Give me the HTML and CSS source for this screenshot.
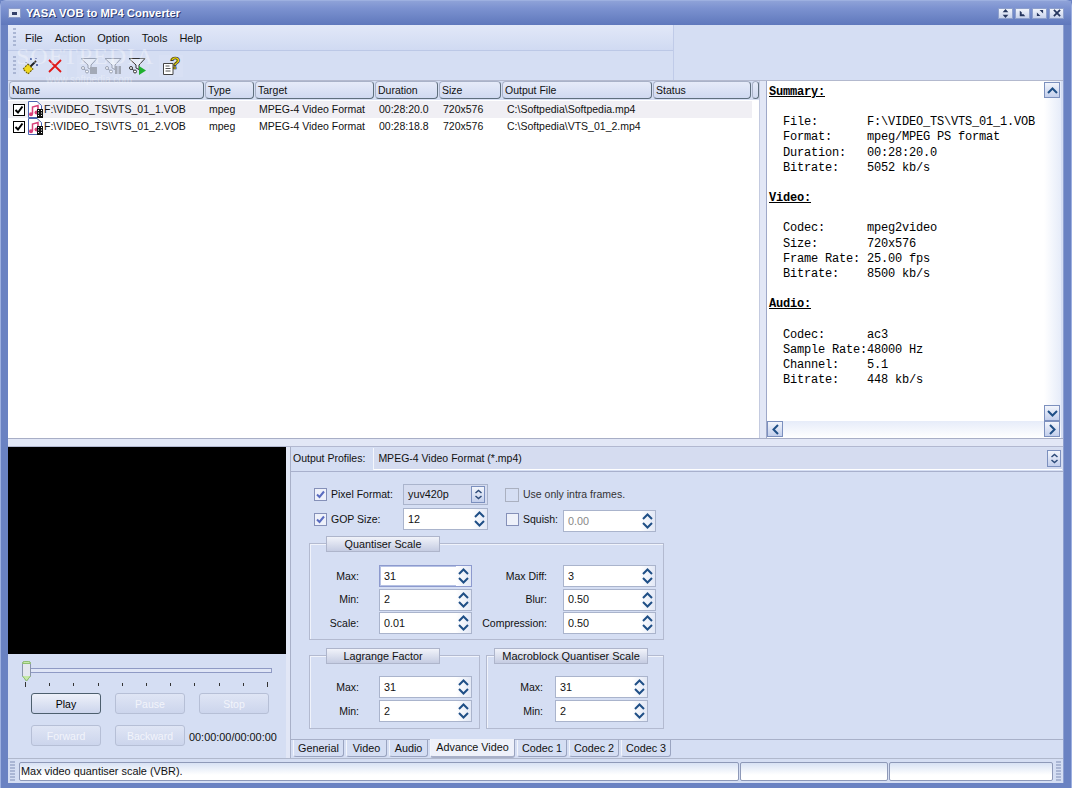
FILE: index.html
```
<!DOCTYPE html>
<html lang="en">
<head>
<meta charset="utf-8">
<title>YASA VOB to MP4 Converter</title>
<link rel="stylesheet" href="styles.css">
</head>
<body>
<svg class="defs" width="0" height="0" aria-hidden="true">
  <defs>
    <symbol id="up" viewBox="0 0 11 7"><path d="M1 6 5.500 1.500 10 6" fill="none" stroke="#1f4f86" stroke-width="2"/></symbol>
    <symbol id="down" viewBox="0 0 11 7"><path d="M1 1 5.500 5.500 10 1" fill="none" stroke="#1f4f86" stroke-width="2"/></symbol>
    <symbol id="updown" viewBox="0 0 9 11"><path d="M1.500 4 4.500 1.500 7.500 4M1.500 7 4.500 9.500 7.500 7" fill="none" stroke="#2c4a78" stroke-width="1.500"/></symbol>
    <symbol id="file" viewBox="0 0 16 17">
      <path d="M.5 .5H9L13.500 4.500V16.500H.5Z" fill="#fff" stroke="#4a64b0"/>
      <path d="M4.500 13V6L10 4.500V11" fill="none" stroke="#d8407a" stroke-width="1.500"/>
      <circle cx="3" cy="13.300" r="2" fill="#d8407a"/>
      <circle cx="8.500" cy="11.500" r="2" fill="#d8407a"/>
      <rect x="9" y="8" width="6" height="9" fill="#111"/>
      <path d="M10 9.500h1M13 9.500h1M10 12h1M13 12h1M10 14.500h1M13 14.500h1" stroke="#fff"/>
    </symbol>
    <symbol id="funnel" viewBox="0 0 18 18">
      <path d="M1 1.500H17L11 8V12.500L8 11V8Z" fill="#e8edf8" stroke="currentColor"/>
      <circle cx="3" cy="11" r="1.500" fill="#fff" stroke="currentColor"/>
      <circle cx="7" cy="14.500" r="1.500" fill="#fff" stroke="currentColor"/>
      <path d="M4 12 6 13.500" stroke="currentColor"/>
    </symbol>
  </defs>
</svg>
<div class="window">
  <header class="titlebar">
    <span class="sysicon"><i></i></span>
    <span class="title">YASA VOB to MP4 Converter</span>
    <div class="winbtns">
      <span class="winbtn"><svg width="9" height="9" viewBox="0 0 9 11"><path d="M4.500 0 8 4H1ZM4.500 11 8 7H1Z" fill="#26365f"/></svg></span>
      <span class="winbtn"><svg width="7" height="7" viewBox="0 0 9 9"><path d="M1 1V8H8L6 5.500H3.500V3Z" fill="#26365f"/></svg></span>
      <span class="winbtn"><svg width="8" height="8" viewBox="0 0 9 9"><path d="M8 1H4L8 5ZM1 8H5L1 4Z" fill="#26365f"/></svg></span>
      <span class="winbtn"><svg width="8" height="8" viewBox="0 0 9 9"><path d="M1 1 8 8M8 1 1 8" stroke="#26365f" stroke-width="2"/></svg></span>
    </div>
  </header>

  <div class="client">
    <div class="bars">
      <div class="bandwrap">
        <nav class="menubar">
          <span class="grip"></span>
          <span>File</span><span>Action</span><span>Option</span><span>Tools</span><span>Help</span>
        </nav>
        <div class="toolbar">
          <span class="grip"></span>
          <span class="tool"><svg width="18" height="18" viewBox="0 0 18 18"><path d="M7 11 14 4" stroke="#222" stroke-width="2"/><path d="M9 1v2M8 2h2M15 7v2M14 8h2M14 1v1M4 5v1" stroke="#3a4a90"/><rect x="2.500" y="8.500" width="7" height="7" fill="#f0d820" stroke="#6a5a00" stroke-dasharray="2 1" transform="rotate(45 6 12)"/></svg></span>
          <span class="tool"><svg width="16" height="16" viewBox="0 0 16 16"><path d="M2 2 14 14M14 2 2 14" stroke="#e01818" stroke-width="1.800"/></svg></span>
          <span class="tool wide"><svg class="dim" width="18" height="18"><use href="#funnel"/><rect x="10" y="10" width="7" height="7" fill="#9aa0ac"/></svg></span>
          <span class="tool"><svg class="dim" width="18" height="18"><use href="#funnel"/><rect x="11" y="9" width="2.500" height="8" fill="#9aa0ac"/><rect x="14.500" y="9" width="2.500" height="8" fill="#9aa0ac"/></svg></span>
          <span class="tool"><svg class="live" width="18" height="18"><use href="#funnel"/><path d="M11 9 18 13.500 11 18Z" fill="#20b030"/></svg></span>
          <span class="tool wide helptool"><svg width="18" height="18" viewBox="0 0 18 18"><path d="M1.500 6.500H11V17.500H1.500Z" fill="#fff" stroke="#444"/><path d="M3.500 9h4M3.500 11.500h5M3.500 14h5" stroke="#555"/></svg><span class="helpq">?</span></span>
        </div>
      </div>
      <div class="bandrest"></div>
      <div class="watermark"><b>SOFTPEDIA</b><small>www.softpedia.com</small></div>
    </div>

    <section class="top">
      <div class="listpane">
        <div class="lhead">
          <span class="c1">Name</span><span class="c2">Type</span><span class="c3">Target</span><span class="c4">Duration</span><span class="c5">Size</span><span class="c6">Output File</span><span class="c7">Status</span><span class="c8"></span>
        </div>
        <div class="lrow sel">
          <span class="c1 namecell"><i class="tick"><svg width="10" height="10" viewBox="0 0 10 10"><path d="M1.500 5 4 7.500 8.500 1.500" fill="none" stroke="#000" stroke-width="2"/></svg></i><svg width="16" height="17"><use href="#file"/></svg>F:\VIDEO_TS\VTS_01_1.VOB</span><span class="c2">mpeg</span><span class="c3">MPEG-4 Video Format</span><span class="c4">00:28:20.0</span><span class="c5">720x576</span><span class="c6">C:\Softpedia\Softpedia.mp4</span>
        </div>
        <div class="lrow">
          <span class="c1 namecell"><i class="tick"><svg width="10" height="10" viewBox="0 0 10 10"><path d="M1.500 5 4 7.500 8.500 1.500" fill="none" stroke="#000" stroke-width="2"/></svg></i><svg width="16" height="17"><use href="#file"/></svg>F:\VIDEO_TS\VTS_01_2.VOB</span><span class="c2">mpeg</span><span class="c3">MPEG-4 Video Format</span><span class="c4">00:28:18.8</span><span class="c5">720x576</span><span class="c6">C:\Softpedia\VTS_01_2.mp4</span>
        </div>
      </div>
      <div class="vsplit"></div>
      <aside class="summary">
        <div class="sumbody">
<pre class="sumtext"><b>Summary:</b>

  File:       F:\VIDEO_TS\VTS_01_1.VOB
  Format:     mpeg/MPEG PS format
  Duration:   00:28:20.0
  Bitrate:    5052 kb/s

<b>Video:</b>

  Codec:      mpeg2video
  Size:       720x576
  Frame Rate: 25.00 fps
  Bitrate:    8500 kb/s

<b>Audio:</b>

  Codec:      ac3
  Sample Rate:48000 Hz
  Channel:    5.1
  Bitrate:    448 kb/s</pre>
          <div class="vscroll">
            <span class="sbtn"><svg width="11" height="7"><use href="#up"/></svg></span>
            <span class="sbtn"><svg width="11" height="7"><use href="#down"/></svg></span>
          </div>
        </div>
        <div class="hscroll">
          <span class="sbtn"><svg width="7" height="11" viewBox="0 0 7 11"><path d="M6 1 1.500 5.500 6 10" fill="none" stroke="#1f4f86" stroke-width="2"/></svg></span>
          <span class="sbtn"><svg width="7" height="11" viewBox="0 0 7 11"><path d="M1 1 5.500 5.500 1 10" fill="none" stroke="#1f4f86" stroke-width="2"/></svg></span>
        </div>
      </aside>
    </section>

    <div class="hsplit"></div>

    <section class="bottom">
      <div class="player">
        <div class="video"></div>
        <div class="slider">
          <div class="track"></div>
          <svg class="thumb" width="11" height="21" viewBox="0 0 11 21"><path d="M1.500 2.500Q1.500 .5 3.500 .5H7.500Q9.500 .5 9.500 2.500V15L5.500 20 1.500 15Z" fill="#e4e7ef" stroke="#8a94ac"/><path d="M1.500 2.500Q1.500 .5 3.500 .5H7.500Q9.500 .5 9.500 2.500H1.500ZM1.500 15 5.500 20 9.500 15" fill="#c5e8a8" stroke="#8fc070"/></svg>
        </div>
        <div class="ticks">
          <i class="long"></i><i></i><i></i><i></i><i></i><i></i><i></i><i></i><i></i><i></i><i class="long"></i>
        </div>
        <div class="pbtns">
          <button class="pbtn play" type="button">Play</button>
          <button class="pbtn off" type="button">Pause</button>
          <button class="pbtn off" type="button">Stop</button>
        </div>
        <div class="pbtns second">
          <button class="pbtn off" type="button">Forward</button>
          <button class="pbtn off" type="button">Backward</button>
          <span class="time">00:00:00/00:00:00</span>
        </div>
      </div>
      <div class="vdiv"></div>
      <div class="settings">
        <div class="profile">
          <label>Output Profiles:</label>
          <div class="profsel">MPEG-4 Video Format (*.mp4)<span class="sbtn small"><svg width="9" height="11"><use href="#updown"/></svg></span></div>
        </div>
        <div class="form">
          <div class="opts">
            <span class="chk"><i class="box on"><svg width="11" height="11" viewBox="0 0 11 11"><path d="M2 5.500 4.500 8 9 2.500" fill="none" stroke="#5a6cc0" stroke-width="2"/></svg></i>Pixel Format:</span>
            <div class="field combo">yuv420p<span class="sbtn small"><svg width="9" height="11"><use href="#updown"/></svg></span></div>
            <span class="chk span2 gray"><i class="box dis"></i>Use only intra frames.</span>
            <span class="chk"><i class="box on"><svg width="11" height="11" viewBox="0 0 11 11"><path d="M2 5.500 4.500 8 9 2.500" fill="none" stroke="#5a6cc0" stroke-width="2"/></svg></i>GOP Size:</span>
            <div class="field spin">12<span class="arrows"><svg width="11" height="7"><use href="#up"/></svg><svg width="11" height="7"><use href="#down"/></svg></span></div>
            <span class="chk tight"><i class="box"></i>Squish:</span>
            <div class="field spin dim">0.00<span class="arrows"><svg width="11" height="7"><use href="#up"/></svg><svg width="11" height="7"><use href="#down"/></svg></span></div>
          </div>

          <div class="group quant">
            <div class="gtitle t114">Quantiser Scale</div>
            <div class="ggrid">
              <label>Max:</label><div class="field spin focus">31<span class="arrows"><svg width="11" height="7"><use href="#up"/></svg><svg width="11" height="7"><use href="#down"/></svg></span></div>
              <label>Max Diff:</label><div class="field spin">3<span class="arrows"><svg width="11" height="7"><use href="#up"/></svg><svg width="11" height="7"><use href="#down"/></svg></span></div>
              <label>Min:</label><div class="field spin">2<span class="arrows"><svg width="11" height="7"><use href="#up"/></svg><svg width="11" height="7"><use href="#down"/></svg></span></div>
              <label>Blur:</label><div class="field spin">0.50<span class="arrows"><svg width="11" height="7"><use href="#up"/></svg><svg width="11" height="7"><use href="#down"/></svg></span></div>
              <label>Scale:</label><div class="field spin">0.01<span class="arrows"><svg width="11" height="7"><use href="#up"/></svg><svg width="11" height="7"><use href="#down"/></svg></span></div>
              <label>Compression:</label><div class="field spin">0.50<span class="arrows"><svg width="11" height="7"><use href="#up"/></svg><svg width="11" height="7"><use href="#down"/></svg></span></div>
            </div>
          </div>

          <div class="grouprow">
            <div class="group lag">
              <div class="gtitle t114">Lagrange Factor</div>
              <div class="ggrid two">
                <label>Max:</label><div class="field spin">31<span class="arrows"><svg width="11" height="7"><use href="#up"/></svg><svg width="11" height="7"><use href="#down"/></svg></span></div>
                <label>Min:</label><div class="field spin">2<span class="arrows"><svg width="11" height="7"><use href="#up"/></svg><svg width="11" height="7"><use href="#down"/></svg></span></div>
              </div>
            </div>
            <div class="group macro">
              <div class="gtitle t154">Macroblock Quantiser Scale</div>
              <div class="ggrid two mac">
                <label>Max:</label><div class="field spin">31<span class="arrows"><svg width="11" height="7"><use href="#up"/></svg><svg width="11" height="7"><use href="#down"/></svg></span></div>
                <label>Min:</label><div class="field spin">2<span class="arrows"><svg width="11" height="7"><use href="#up"/></svg><svg width="11" height="7"><use href="#down"/></svg></span></div>
              </div>
            </div>
          </div>
        </div>
        <div class="tabs">
          <span class="tab w51">Generial</span><span class="tab w41">Video</span><span class="tab w39">Audio</span><span class="tab active w85">Advance Video</span><span class="tab w50">Codec 1</span><span class="tab w50">Codec 2</span><span class="tab w50">Codec 3</span>
        </div>
      </div>
    </section>

    <footer class="status">
      <span class="grip sg"></span>
      <span class="panel p1">Max video quantiser scale (VBR).</span>
      <span class="panel p2"></span>
      <span class="panel p3"></span>
      <span class="grip sg end"></span>
    </footer>
  </div>
</div>
</body>
</html>
```
FILE: styles.css
```
* { box-sizing: border-box; }
html, body { margin: 0; height: 100%; }
body { font: 10.5px/13px "Liberation Sans", Arial, sans-serif; color: #111; background: #6c84c4; overflow: hidden; }
.defs { position: absolute; }
.window {
  width: 1072px; height: 788px; display: flex; flex-direction: column;
  background: #6a82c2; border: 1px solid #9db0e0; border-bottom: 0;
  border-radius: 6px 6px 0 0; box-shadow: inset 0 1px 0 #b6c5ec;
}
.titlebar {
  height: 24px; flex: none; display: flex; align-items: center; padding: 0 7px 0 7px;
  background: linear-gradient(#8ea2d8, #7c92d0 30%, #5f78bc);
}
.sysicon { width: 13px; height: 10px; background: #e4e9f6; border: 1px solid #8b9bc8; display: flex; align-items: center; justify-content: center; }
.sysicon i { width: 5px; height: 3px; background: #35416a; }
.title { margin-left: 5px; color: #fff; font-weight: 700; font-size: 11.3px; text-shadow: 1px 1px 0 #2b3a70; }
.winbtns { margin-left: auto; display: flex; gap: 2px; }
.winbtn { width: 15px; height: 11px; display: flex; align-items: center; justify-content: center; background: linear-gradient(#f2f5fc, #c8d2ec); border: 1px solid #8ea0cc; }

.client { flex: 1; min-height: 0; margin: 0 7px 5px; display: flex; flex-direction: column; background: #d5def3; border-right: 1px solid #8ea0d0; }
.bars { position: relative; height: 56px; flex: none; display: flex; background: #d5def3; border-bottom: 1px solid #b3b9ce; }
.bandwrap { width: 666px; flex: none; border-right: 1px solid #c0cbe8; }
.bandrest { flex: 1; background: #d5def3; }
.grip { width: 3px; height: 20px; margin-right: 9px; flex: none; background: repeating-linear-gradient(#aab6d4 0 2px, transparent 2px 4px); }
.menubar { height: 26px; display: flex; align-items: center; gap: 12px; padding: 2px 0 0 5px; background: linear-gradient(#e2e8f8, #d0daf2); border-bottom: 1px solid #bcc8e6; font-size: 11px; }
.menubar .grip { margin-right: -3px; margin-top: -2px; }
.toolbar { height: 29px; display: flex; align-items: center; padding-left: 5px; }
.toolbar .grip { margin-right: 3px; }
.tool { width: 24px; height: 22px; display: flex; align-items: center; justify-content: center; background: rgba(255,255,255,.08); }
.tool.wide { margin-left: 10px; }
.helptool { position: relative; }
.helpq { position: absolute; left: 11px; top: 0; font: 700 17px/18px "Liberation Sans", sans-serif; color: #f6de00; -webkit-text-stroke: .7px #222; }
.dim { color: #8f97a8; opacity: .85; }
.live { color: #333; }
.watermark { position: absolute; left: 8px; top: 19px; color: #fff; opacity: .35; pointer-events: none; font-family: "Liberation Serif", serif; }
.watermark b { display: block; font-size: 24px; line-height: 24px; letter-spacing: 1px; font-weight: 400; }
.watermark small { display: block; margin: 6px 0 0 30px; font: 10px "Liberation Sans", sans-serif; }

.top { height: 357px; flex: none; display: flex; background: #fff; }
.listpane { width: 751px; flex: none; background: #fff; }
.lhead { height: 19px; display: flex; background: #d5def3; padding-left: 1px; }
.lhead span { height: 18px; margin-right: 1px; padding: 2px 0 0 2px; background: linear-gradient(#e6ebf9, #d0d9f1); border: 1px solid #5f6f7e; border-left-color: #a9b2c8; border-top-color: #a9b2c8; border-radius: 4px; }
.lhead .c8 { flex: 1; margin-right: 0; }
.c1 { width: 196px; } .c2 { width: 50px; } .c3 { width: 120px; } .c4 { width: 64px; } .c5 { width: 64px; } .c6 { width: 151px; } .c7 { width: 99px; } .c8 { width: 8px; }
.lhead .c1 { width: 195px; } .lhead .c2 { width: 49px; } .lhead .c3 { width: 119px; } .lhead .c4 { width: 63px; } .lhead .c5 { width: 62px; } .lhead .c6 { width: 150px; } .lhead .c7 { width: 98px; }
.lrow { height: 17px; display: flex; align-items: center; margin-top: 0; width: 744px; }
.lrow span { padding-left: 5px; white-space: nowrap; }
.lrow.sel { margin-top: 1px; background: #f0eff4; }
.namecell { display: flex; align-items: center; }
.lrow .namecell { padding-left: 5px; width: 196px; }
.tick { width: 12px; height: 12px; margin-right: 3px; border: 1px solid #000; background: #fff; display: flex; align-items: center; justify-content: center; flex: none; }
.vsplit { width: 8px; flex: none; background: #e2e7f6; border-left: 1px solid #c4cbe0; border-right: 1px solid #9ea8c8; }
.summary { flex: 1; min-width: 0; display: flex; flex-direction: column; border-right: 2px solid #d5def3; }
.sumbody { flex: 1; min-height: 0; display: flex; }
.sumtext { flex: 1; margin: 0; padding: 4px 0 0 2px; overflow: hidden; font: 12px/15.15px "Liberation Mono", "Courier New", monospace; letter-spacing: -.2px; color: #000; }
.sumtext b { font-weight: 700; text-decoration: underline; }
.vscroll { width: 17px; flex: none; display: flex; flex-direction: column; justify-content: space-between; padding-top: 1px; background: linear-gradient(90deg, #fff, #e6ecf9); }
.sbtn { width: 16px; height: 16px; flex: none; display: flex; align-items: center; justify-content: center; background: linear-gradient(#f2f5fc, #c3cfec); border: 1px solid #7c90be; }
.sbtn.small { width: 14px; height: 17px; }
.hscroll { height: 17px; flex: none; display: flex; justify-content: space-between; background: linear-gradient(#e6ecf9, #fff); padding-right: 1px; }

.hsplit { height: 9px; flex: none; background: #e2e7f6; border-top: 1px solid #a8aec6; border-bottom: 1px solid #b2b8d0; }
.bottom { flex: 1; min-height: 0; display: flex; }
.player { width: 278px; flex: none; }
.video { height: 207px; background: #000; }
.slider { position: relative; height: 29px; padding: 14px 14px 0 22px; }
.track { height: 5px; background: #e0e6f6; border: 1px solid #8f9ac4; }
.thumb { position: absolute; left: 13px; top: 7px; }
.ticks { height: 6px; padding: 0 18px 0 17px; display: flex; justify-content: space-between; margin-top: -2px; }
.ticks i { width: 1px; height: 3px; margin-top: 2px; background: #333; }
.ticks i.long { height: 5px; margin-top: 1px; }
.pbtns { display: flex; gap: 14px; padding-left: 23px; margin-top: 6px; align-items: center; }
.pbtns.second { margin-top: 11px; }
.pbtn { width: 70px; height: 21px; padding: 0; font: 10.5px "Liberation Sans", sans-serif; color: #000; background: linear-gradient(#eef1fa, #ccd5ec); border: 1px solid #b6bfd6; border-radius: 3px; }
.pbtn.play { border-color: #4d5f6e; }
.pbtn.off { color: #f2f4fb; background: linear-gradient(#dfe5f5, #ccd5ec); }
.time { margin-left: -10px; font-size: 10.9px; margin-top: 4px; }
.vdiv { width: 5px; flex: none; background: #e2e7f6; border-right: 1px solid #a8b0c8; }
.settings { flex: 1; min-width: 0; display: flex; flex-direction: column; }
.profile { height: 25px; flex: none; display: flex; align-items: center; padding: 0 1px 1px 2px; border-bottom: 1px solid #a8b0cc; gap: 8px; }
.profsel { flex: 1; height: 22px; display: flex; align-items: center; justify-content: space-between; padding: 0 1px 0 4px; background: #d5dcf0; border-left: 1px solid #f4f6fc; border-bottom: 1px solid #fff; }
.form { flex: 1; padding: 12px 0 0 18px; }
.opts { display: grid; grid-template-columns: 89px 85px 17px 58px 93px; grid-template-rows: 21px 22px; row-gap: 3px; padding-left: 5px; align-items: center; }
.opts > .field { height: 100%; }
.chk { display: flex; align-items: center; gap: 4px; }
.box { width: 13px; height: 13px; background: #eef1fa; border: 1px solid #8590b8; display: flex; align-items: center; justify-content: center; flex: none; }
.box.dis { background: #d5def3; border-color: #aab0c0; width: 14px; height: 14px; }
.chk.gray { color: #333; }
.chk.tight { grid-column: 3 / span 2; margin: 0 0 0 18px; }
.opts .chk.span2 { grid-column: 3 / span 3; margin-left: 17px; }
.opts .dim { color: #888; opacity: 1; grid-column: 5; margin: 2px 0 -2px; }
.field { height: 22px; display: flex; align-items: center; justify-content: space-between; padding-left: 4px; background: #fff; border: 1px solid #aab4cc; font-size: 10.8px; }
.field.focus { border-color: #8d9ace; box-shadow: 0 0 0 1px #b6c2e4 inset; }
.combo { background: #d5dcf0; border-color: #fff; outline: 1px solid #aab4cc; outline-offset: -1px; padding-right: 2px; }
.arrows { display: flex; flex-direction: column; gap: 2px; padding: 0 2px; background: linear-gradient(90deg, #fff, #e2e8f6); height: 100%; justify-content: center; }
.group { border: 1px solid #b3bad0; box-shadow: inset 1px 1px 0 #f0f3fb; margin-top: 13px; }
.quant { width: 355px; height: 97px; margin-top: 13px; }
.gtitle { height: 16px; margin: -8px 0 0 16px; display: flex; align-items: center; justify-content: center; font-size: 10.8px; background: linear-gradient(#f1f3fa, #c5cce2); border: 1px solid #aeb5cb; }
.t114 { width: 114px; } .t154 { width: 154px; margin-left: 7px; font-size: 11px; }
.ggrid { display: grid; column-gap: 0; grid-template-columns: 49px 20px 93px 75px 16px 93px; row-gap: 1.5px; margin-top: 13px; align-items: center; grid-auto-rows: 22px; }
.ggrid label { text-align: right; }
.ggrid label:nth-of-type(odd) { grid-column: 1; }
.ggrid label:nth-of-type(even) { grid-column: 4; }
.ggrid .field:nth-of-type(odd) { grid-column: 3; }
.ggrid .field:nth-of-type(even) { grid-column: 6; }
.grouprow { display: flex; gap: 6px; margin-top: 15px; }
.lag { width: 171px; height: 74px; margin-top: 0; }
.macro { width: 178px; height: 74px; margin-top: 0; }
.two { grid-template-columns: 49px 20px 93px; margin-top: 12px; row-gap: 2px; }
.two label:nth-of-type(n) { grid-column: 1; }
.two .field:nth-of-type(n) { grid-column: 3; }
.two.mac { grid-template-columns: 56px 12px 93px; }
.tabs { height: 19px; flex: none; display: flex; gap: 2px; padding-left: 2px; border-top: 1px solid #a8b0c8; }
.tab { height: 17px; display: flex; align-items: center; justify-content: center; font-size: 10.8px; background: #d5def3; border: 1px solid #f2f5fc; border-top: 0; border-right-color: #9aa4c0; border-bottom-color: #9aa4c0; border-radius: 0 0 3px 3px; }
.tab.active { height: 19px; margin-top: -1px; background: #eef1fa; border-bottom: 2px solid #a8b0c8; }
.w51 { width: 51px; } .w41 { width: 41px; } .w39 { width: 39px; } .w85 { width: 85px; } .w50 { width: 50px; }
.status { height: 25px; flex: none; display: flex; align-items: center; gap: 1px; border-top: 1px solid #b0b8cc; padding: 0 1px 0 2px; }
.sg { width: 5px; margin-right: 3px; background: repeating-linear-gradient(#aab6d4 0 2px, transparent 2px 3px); }
.sg.end { margin: 0 0 0 2px; }
.panel { height: 19px; padding-left: 1px; display: flex; align-items: center; background: linear-gradient(#d8e2f4, #fff 70%); border: 1px solid #8e99b8; border-radius: 2px; font-size: 10.9px; }
.p1 { width: 720px; } .p2 { width: 148px; } .p3 { width: 164px; }
```
